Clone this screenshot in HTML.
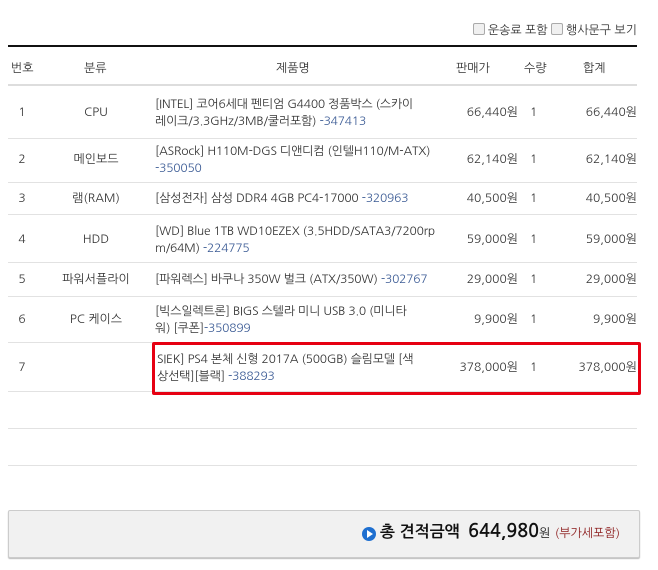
<!DOCTYPE html>
<html><head><meta charset="utf-8"><style>
body{margin:0;width:658px;height:570px;background:#fff;font-family:"NanumGothic","Liberation Sans","Noto Sans CJK KR",sans-serif;font-size:12px;color:#333;position:relative;overflow:hidden}
.a{position:absolute}
.hl{position:absolute;left:8px;width:629px;height:1px;background:#e2e2e2}
.n{color:#3a5a94}
.cb{display:inline-block;width:10px;height:10px;border:1px solid #aaa;border-radius:2px;background:#f0f0f0;vertical-align:-1px;margin-right:3px}
.row{position:absolute;left:0;width:658px}
.row div{position:absolute;line-height:17px}
.row .no{left:8px;width:28px;text-align:center}
.row .cat{left:50px;width:92px;text-align:center}
.row .nm{left:155px;width:286px;top:0;word-break:break-all;letter-spacing:-0.2px}
.row .pr{left:430px;width:88px;text-align:right}
.row .q{left:530px}
.row .t{left:550px;width:87px;text-align:right}
</style></head><body>
<div class="a" style="right:21px;top:23px"><span class="cb"></span>운송료 포함 <span class="cb"></span>행사문구 보기</div>
<div class="a" style="left:8px;top:45px;width:629px;height:2px;background:#111"></div>
<div class="a" style="left:11px;top:61px">번호</div>
<div class="a" style="left:84px;top:61px">분류</div>
<div class="a" style="left:276px;top:61px">제품명</div>
<div class="a" style="left:456px;top:61px">판매가</div>
<div class="a" style="left:524px;top:61px">수량</div>
<div class="a" style="left:583px;top:61px">합계</div>
<div class="hl" style="top:84px;height:2px;background:#ddd"></div>

<div class="row" style="top:96px"><div class="no" style="top:8px">1</div><div class="cat" style="top:8px">CPU</div><div class="nm">[INTEL] 코어6세대 펜티엄 G4400 정품박스 (스카이<br>레이크/3.3GHz/3MB/쿨러포함) <span class="n">-347413</span></div><div class="pr" style="top:8px">66,440원</div><div class="q" style="top:8px">1</div><div class="t" style="top:8px">66,440원</div></div>
<div class="hl" style="top:138px"></div>
<div class="row" style="top:143px"><div class="no" style="top:8px">2</div><div class="cat" style="top:8px">메인보드</div><div class="nm">[ASRock] H110M-DGS 디앤디컴 (인텔H110/M-ATX)<br><span class="n">-350050</span></div><div class="pr" style="top:8px">62,140원</div><div class="q" style="top:8px">1</div><div class="t" style="top:8px">62,140원</div></div>
<div class="hl" style="top:182px"></div>
<div class="row" style="top:190px"><div class="no">3</div><div class="cat">램(RAM)</div><div class="nm">[삼성전자] 삼성 DDR4 4GB PC4-17000 <span class="n">-320963</span></div><div class="pr">40,500원</div><div class="q">1</div><div class="t">40,500원</div></div>
<div class="hl" style="top:214px"></div>
<div class="row" style="top:223px"><div class="no" style="top:8px">4</div><div class="cat" style="top:8px">HDD</div><div class="nm">[WD] Blue 1TB WD10EZEX (3.5HDD/SATA3/7200rp<br>m/64M) <span class="n">-224775</span></div><div class="pr" style="top:8px">59,000원</div><div class="q" style="top:8px">1</div><div class="t" style="top:8px">59,000원</div></div>
<div class="hl" style="top:262px"></div>
<div class="row" style="top:271px"><div class="no">5</div><div class="cat">파워서플라이</div><div class="nm">[파워렉스] 바쿠나 350W 벌크 (ATX/350W) <span class="n">-302767</span></div><div class="pr">29,000원</div><div class="q">1</div><div class="t">29,000원</div></div>
<div class="hl" style="top:296px"></div>
<div class="row" style="top:303px"><div class="no" style="top:8px">6</div><div class="cat" style="top:8px">PC 케이스</div><div class="nm">[빅스일렉트론] BIGS 스텔라 미니 USB 3.0 (미니타<br>워) [쿠폰]<span class="n">-350899</span></div><div class="pr" style="top:8px">9,900원</div><div class="q" style="top:8px">1</div><div class="t" style="top:8px">9,900원</div></div>
<div class="hl" style="top:342px"></div>
<div class="row" style="top:351px"><div class="no" style="top:8px">7</div><div class="nm" style="left:157px">SIEK] PS4 본체 신형 2017A (500GB) 슬림모델 [색<br>상선택][블랙] <span class="n">-388293</span></div><div class="pr" style="top:8px">378,000원</div><div class="q" style="top:8px">1</div><div class="t" style="top:8px">378,000원</div></div>
<div class="hl" style="top:391px"></div>
<div class="a" style="left:152px;top:342px;width:483px;height:47px;border:3px solid #e60012;border-radius:2px"></div>
<div class="hl" style="top:428px"></div>
<div class="hl" style="top:465px"></div>

<div class="a" style="left:8px;top:510px;width:630px;height:46px;background:#f1f1f1;border:1px solid #ccc;border-radius:2px;box-shadow:0 1px 1px #bbb"></div>
<div class="a" style="left:362px;top:527px;width:14px;height:14px;border-radius:50%;background:#1e6fd0"></div>
<div class="a" style="left:367px;top:530px;width:0;height:0;border-left:6px solid #fff;border-top:4px solid transparent;border-bottom:4px solid transparent"></div>
<div class="a" style="left:380px;top:522px;font-size:16px;font-weight:bold;color:#111;white-space:nowrap">총 견적금액 <span style="font-size:18px;margin-left:4px">644,980</span><span style="font-size:12px;font-weight:normal">원</span> <span style="font-size:12px;font-weight:normal;color:#8b1a1a">(부가세포함)</span></div>
</body></html>
